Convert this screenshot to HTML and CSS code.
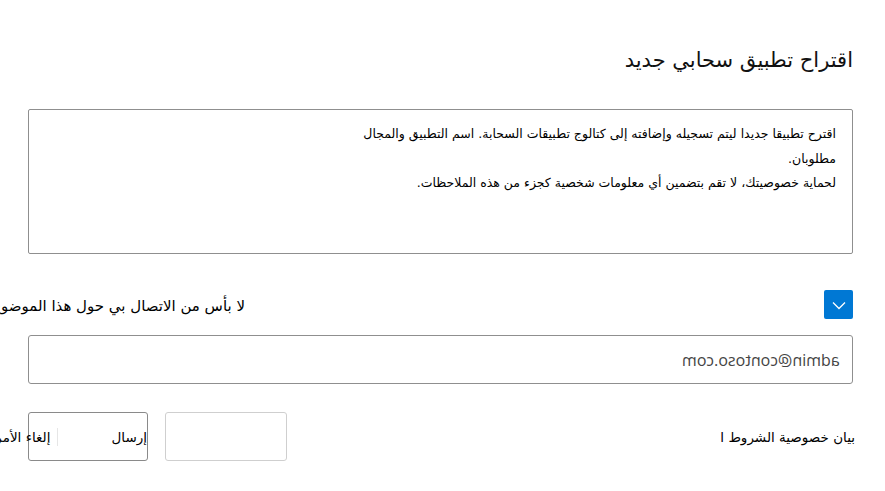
FILE: index.html
```html
<!DOCTYPE html>
<html lang="ar" dir="rtl">
<head>
<meta charset="utf-8">
<title>اقتراح تطبيق سحابي جديد</title>
<link rel="stylesheet" href="styles.css">
</head>
<body>
<main class="panel">
  <h1 class="title">اقتراح تطبيق سحابي جديد</h1>
  <div class="notes">
    <p class="notes-text">اقترح تطبيقا جديدا ليتم تسجيله وإضافته إلى كتالوج تطبيقات السحابة. اسم التطبيق والمجال<br>مطلوبان.<br>لحماية خصوصيتك، لا تقم بتضمين أي معلومات شخصية كجزء من هذه الملاحظات.</p>
  </div>
  <div class="contact-row">
    <button class="check" type="button" aria-label="اختيار">
      <svg width="16" height="16" viewBox="0 0 16 16"><path d="M2 5.5 L8 11.5 L14 5.5" fill="none" stroke="#fff" stroke-width="1.3"/></svg>
    </button>
    <div class="contact-label">لا بأس من الاتصال بي حول هذا الموضوع</div>
  </div>
  <div class="email">
    <span class="email-text">admin@contoso.com</span>
  </div>
  <div class="footer">
    <div class="links">بيان خصوصية الشروط ا</div>
    <div class="actions">
      <div class="btn btn-empty"></div>
      <div class="btn btn-main">
        <span class="send">إرسال</span>
        <span class="sep"></span>
        <span class="cancel">إلغاء الأمر</span>
      </div>
    </div>
  </div>
</main>
</body>
</html>
```

FILE: styles.css
```css
html, body {
  margin: 0;
  padding: 0;
  background: #fff;
}
body {
  font-family: "DejaVu Sans", "Noto Sans", sans-serif;
  color: #000;
  overflow: hidden;
}
.panel {
  direction: rtl;
  padding: 45px 32px 0 28px;
}
.title {
  margin: 0;
  font-weight: normal;
  font-size: 21px;
  line-height: 30px;
  height: 30px;
  color: #111;
}
.notes {
  margin-top: 34px;
  height: 143px;
  border: 1px solid #8f8f8f;
  border-radius: 2px;
  padding: 12px 16px 0 16px;
  box-sizing: border-box;
  height: 145px;
}
.notes-text {
  margin: 0;
  font-size: 12.5px;
  line-height: 24.5px;
  white-space: nowrap;
}
.contact-row {
  margin-top: 36px;
  display: flex;
  align-items: center;
  justify-content: space-between;
  height: 29px;
}
.check {
  width: 29px;
  height: 29px;
  padding: 0;
  border: none;
  border-radius: 2px;
  background: #0078d4;
  display: flex;
  align-items: center;
  justify-content: center;
}
.contact-label {
  width: 217px;
  white-space: nowrap;
  font-size: 15px;
  line-height: 29px;
  margin-top: 4px;
}
.email {
  margin-top: 16px;
  height: 49px;
  box-sizing: border-box;
  border: 1px solid #8f8f8f;
  border-radius: 3px;
  display: flex;
  align-items: center;
  padding-right: 12px;
}
.email-text {
  display: inline-block;
  direction: ltr;
  transform: scaleX(-1);
  font-family: "Open Sans", "Liberation Sans", sans-serif;
  font-size: 16px;
  color: #444;
  margin-top: 1px;
}
.footer {
  margin-top: 28px;
  display: flex;
  align-items: center;
  justify-content: space-between;
}
.links {
  font-size: 13.5px;
  margin-right: -2px;
  white-space: nowrap;
}
.actions {
  display: flex;
  gap: 17px;
}
.btn {
  height: 49px;
  box-sizing: border-box;
  border-radius: 3px;
}
.btn-empty {
  width: 122px;
  border: 1px solid #cfcfcf;
}
.btn-main {
  width: 120px;
  border: 1px solid #8a8a8a;
  display: flex;
  align-items: center;
  font-size: 13.5px;
  white-space: nowrap;
}
.send {
  margin-left: 53px;
}
.sep {
  width: 1px;
  height: 18px;
  background: #e6e6e6;
  margin-left: 7px;
  flex: none;
}
.cancel {
  flex: none;
}
```
